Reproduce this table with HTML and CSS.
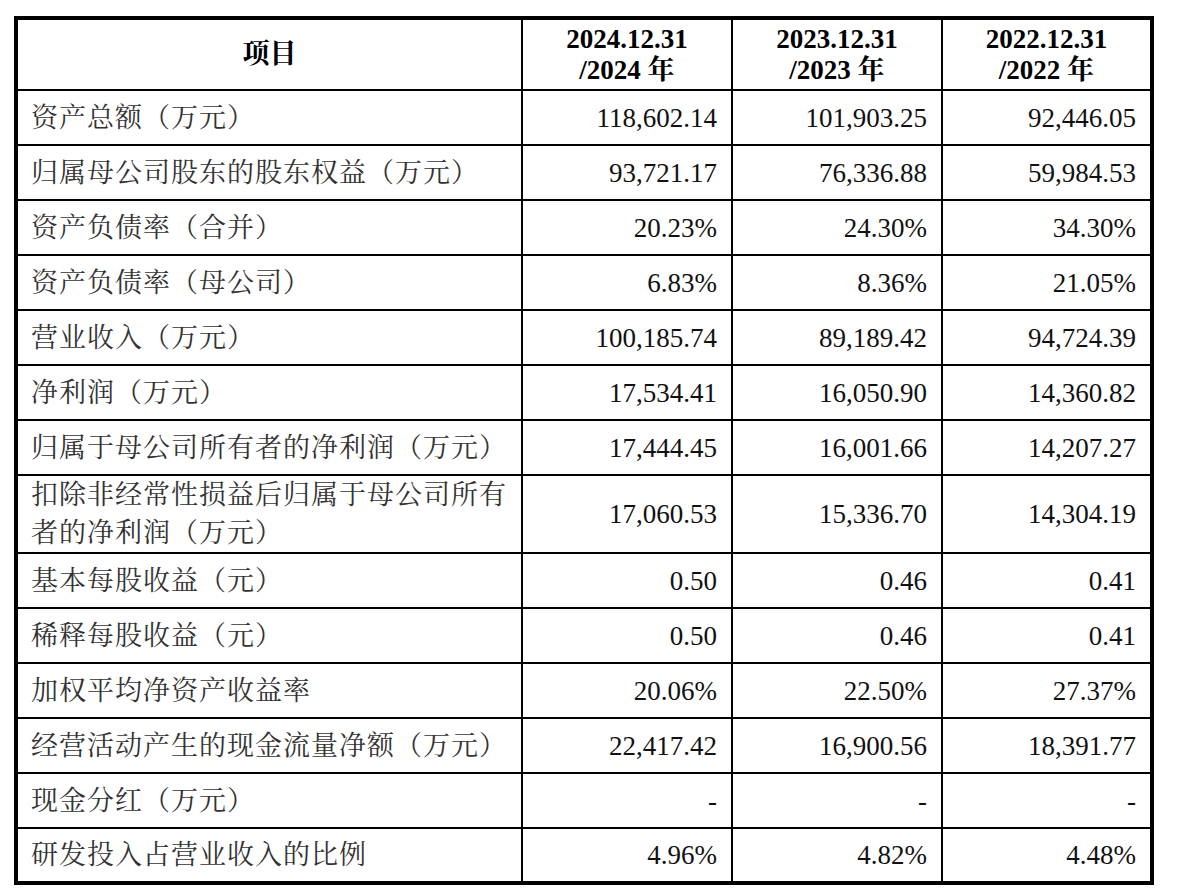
FILE: index.html
```html
<!DOCTYPE html>
<html lang="zh-CN">
<head>
<meta charset="utf-8">
<title>主要财务数据</title>
<link rel="stylesheet" href="styles.css">
</head>
<body>
<table class="fin">
  <colgroup>
    <col class="c1"><col class="c2"><col class="c3"><col class="c4">
  </colgroup>
  <thead>
    <tr class="head">
      <th class="label-h">项目</th>
      <th>2024.12.31<br>/2024 年</th>
      <th>2023.12.31<br>/2023 年</th>
      <th class="last">2022.12.31<br>/2022 年</th>
    </tr>
  </thead>
  <tbody>
    <tr><td class="label">资产总额（万元）</td><td>118,602.14</td><td>101,903.25</td><td class="last">92,446.05</td></tr>
    <tr><td class="label">归属母公司股东的股东权益（万元）</td><td>93,721.17</td><td>76,336.88</td><td class="last">59,984.53</td></tr>
    <tr><td class="label">资产负债率（合并）</td><td>20.23%</td><td>24.30%</td><td class="last">34.30%</td></tr>
    <tr><td class="label">资产负债率（母公司）</td><td>6.83%</td><td>8.36%</td><td class="last">21.05%</td></tr>
    <tr><td class="label">营业收入（万元）</td><td>100,185.74</td><td>89,189.42</td><td class="last">94,724.39</td></tr>
    <tr><td class="label">净利润（万元）</td><td>17,534.41</td><td>16,050.90</td><td class="last">14,360.82</td></tr>
    <tr><td class="label">归属于母公司所有者的净利润（万元）</td><td>17,444.45</td><td>16,001.66</td><td class="last">14,207.27</td></tr>
    <tr class="tall"><td class="label">扣除非经常性损益后归属于母公司所有者的净利润（万元）</td><td>17,060.53</td><td>15,336.70</td><td class="last">14,304.19</td></tr>
    <tr><td class="label">基本每股收益（元）</td><td>0.50</td><td>0.46</td><td class="last">0.41</td></tr>
    <tr><td class="label">稀释每股收益（元）</td><td>0.50</td><td>0.46</td><td class="last">0.41</td></tr>
    <tr><td class="label">加权平均净资产收益率</td><td>20.06%</td><td>22.50%</td><td class="last">27.37%</td></tr>
    <tr><td class="label">经营活动产生的现金流量净额（万元）</td><td>22,417.42</td><td>16,900.56</td><td class="last">18,391.77</td></tr>
    <tr><td class="label">现金分红（万元）</td><td>-</td><td>-</td><td class="last">-</td></tr>
    <tr class="end"><td class="label">研发投入占营业收入的比例</td><td>4.96%</td><td>4.82%</td><td class="last">4.48%</td></tr>
  </tbody>
</table>
</body>
</html>
```

FILE: styles.css
```css
html, body {
  margin: 0;
  padding: 0;
  background: #ffffff;
}

body {
  padding: 16px 0 0 14px;
  font-family: "Liberation Serif", "Noto Serif CJK SC", "Noto Sans CJK SC", serif;
  color: #111111;
}

.fin {
  table-layout: fixed;
  border-collapse: separate;
  border-spacing: 0;
  border: 4px solid #000;
  width: 1140px;
  font-size: 27px;
}

.c1 { width: 505px; }
.c2 { width: 210px; }
.c3 { width: 210px; }
.c4 { width: 207px; }

.fin th,
.fin td {
  box-sizing: border-box;
  border-right: 2px solid #000;
  border-bottom: 2px solid #000;
  padding: 0 14px 0 14px;
  vertical-align: middle;
}

.fin th.last,
.fin td.last {
  border-right: none;
}

.head th {
  height: 71px;
  font-weight: bold;
  text-align: center;
  line-height: 31px;
  color: #000;
}

.fin td {
  height: 55px;
  line-height: 38px;
  text-align: right;
  color: #111;
}

.fin td.label {
  text-align: left;
  padding-left: 13px;
  padding-right: 8px;
  letter-spacing: 1px;
  color: #333;
}

.fin tr.tall td {
  height: 75px;
}

.fin tr.end td {
  border-bottom: none;
  height: 52px;
}
```
